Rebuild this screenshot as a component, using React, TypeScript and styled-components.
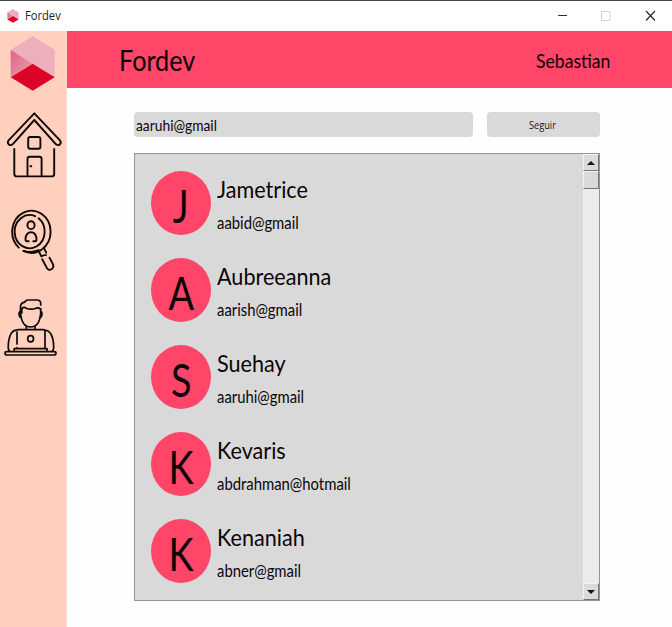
import React from "react";
import styled, { createGlobalStyle } from "styled-components";

const Global = createGlobalStyle`
  * { box-sizing: border-box; }
  body { margin: 0; background: #fff; overflow: hidden; font-family: Lato, "Open Sans", sans-serif; color: #0c0508; }
`;

const Window = styled.div`
  width: 672px;
  height: 627px;
  display: flex;
  flex-direction: column;
  background: #fefefe;
`;

const TitleBar = styled.header`
  height: 31px;
  flex: none;
  display: flex;
  align-items: center;
  border-top: 1px solid #454345;
  padding-left: 6px;
  background: #fff;
`;

const Label = styled.span<{ $size: number; $scale: number; $line: number }>`
  display: block;
  white-space: nowrap;
  font-size: ${(p) => p.$size}px;
  line-height: ${(p) => p.$line}px;
  transform: scaleX(${(p) => p.$scale});
  transform-origin: left center;
`;

const WindowName = styled.div`
  flex: 1;
  margin-left: 5px;
  color: #222;
  font-family: "Open Sans", sans-serif;
`;

const WindowControls = styled.div`
  display: flex;
  width: 132px;
  & > svg { width: 44px; height: 30px; }
`;

const Body = styled.div`
  flex: 1;
  display: flex;
  min-height: 0;
`;

const Sidebar = styled.nav`
  width: 67px;
  display: flex;
  flex-direction: column;
  background: #fed0bd;
  border-right: 1px solid #fbdcd2;
  & > svg { display: block; flex: none; width: 66px; }
`;

const Main = styled.main`
  flex: 1;
  display: flex;
  flex-direction: column;
`;

const Banner = styled.div`
  height: 57px;
  display: flex;
  justify-content: space-between;
  background: #ff4568;
  padding: 0 57px 0 52px;
`;

const BannerUser = styled.div`
  width: 79px;
`;

const Content = styled.section`
  width: 466px;
  margin: 24px 0 0 67px;
`;

const SearchRow = styled.div`
  display: flex;
  gap: 14px;
  height: 25px;
`;

const SearchField = styled.div`
  flex: 1;
  padding-left: 2px;
  background: #d9d9d9;
  border-radius: 4px;
`;

const FollowButton = styled.button`
  width: 113px;
  padding: 0 0 0 42px;
  border: 0;
  border-radius: 4px;
  background: #d9d9d9;
  color: #19151c;
  text-align: left;
  font-family: "Open Sans", sans-serif;
`;

const ListBox = styled.div`
  display: flex;
  height: 448px;
  margin-top: 16px;
  border: 1px solid #949494;
  background: #d9d9d9;
`;

const People = styled.ul`
  flex: 1;
  margin: 0;
  padding: 17px 0 0 16px;
  list-style: none;
`;

const Person = styled.li`
  display: flex;
  gap: 6px;
  height: 87px;
`;

const Avatar = styled.div`
  display: flex;
  justify-content: center;
  width: 60px;
  height: 64px;
  border-radius: 50%;
  background: #ff4568;
`;

const Initial = styled.span`
  font-size: 45.5px;
  line-height: 69px;
  transform: scaleX(0.83);
`;

const Scrollbar = styled.div`
  width: 16px;
  display: flex;
  flex-direction: column;
  background: #ececec;
`;

const ScrollPart = styled.div<{ $height: number }>`
  height: ${(p) => p.$height}px;
  flex: none;
  display: flex;
  align-items: center;
  justify-content: center;
  background: #dadada;
  border: 1px solid;
  border-color: #f4f4f4 #777 #777 #f4f4f4;
`;

const Track = styled.div`
  flex: 1;
`;

const Arrow = styled.i<{ $down?: boolean }>`
  border: 4px solid transparent;
  border-top: ${(p) => (p.$down ? "4px solid #111" : "0")};
  border-bottom: ${(p) => (p.$down ? "0" : "4px solid #111")};
`;

const Cube = () => (
  <>
    <path d="M22 0L44 13.5V41L22 27.5L0 13.5Z" fill="#edafb9" />
    <path d="M0 13.5L22 27.5L0 41Z" fill="url(#side)" />
    <path d="M22 27.5L44 41L22 54.5L0 41Z" fill="#dc0327" />
    <defs>
      <linearGradient id="side" x1="0" y1="0" x2="1" y2="1">
        <stop offset="0" stopColor="#e06287" />
        <stop offset="1" stopColor="#eaa2af" />
      </linearGradient>
    </defs>
  </>
);

const stroke = {
  fill: "none",
  stroke: "#100807",
  strokeWidth: 1.9,
  strokeLinecap: "round" as const,
  strokeLinejoin: "round" as const,
};

const HouseIcon = () => (
  <svg height="90" viewBox="0 100 66 90" {...stroke}>
    <path d="M34.3 113.3L60 140.3Q61.5 142.5 60 144.2Q58 146 56 144.3L34.3 120L12.6 144.3Q10.5 146 8.6 144.2Q7 142.5 8.6 140.3Z" />
    <path d="M14.3 149V174Q14.3 176.4 16.7 176.4H51.8Q54.2 176.4 54.2 174V149" />
    <rect x="28.2" y="137" width="12.2" height="11.8" rx="2" />
    <path d="M27.5 176V159Q27.5 156.7 29.8 156.7H39.3Q41.6 156.7 41.6 159V176M30.4 166.3H31.3" />
  </svg>
);

const SearchPersonIcon = () => (
  <svg height="90" viewBox="0 190 66 90" {...stroke}>
    <path d="M18.8 247.6A19.2 21 0 1 1 23.5 250.9" />
    <path d="M23.5 250.9Q30.5 253.5 38.6 250.2" />
    <path d="M35.2 216.2A15 16.6 0 1 0 38.6 218.3" />
    <ellipse cx="31" cy="225.2" rx="3.6" ry="3.9" />
    <path d="M28.7 241.3H27Q25.3 241.3 25.5 239Q26 232.2 31 232.2Q36 232.2 36.5 239Q36.7 241.3 35 241.3H33.3" />
    <path d="M38.8 251.4L41.3 256.3Q44.5 254.7 45.9 255.2M44 248.2L46.2 252.7" />
    <path d="M42.2 259.2L46.4 267.1Q48.4 271.2 51.5 269.3Q54.6 267.1 52.6 263.5L49.5 257.7" />
  </svg>
);

const DeveloperIcon = () => (
  <svg height="90" viewBox="0 280 66 90" {...stroke} strokeWidth={1.7}>
    <path d="M40.7 305V303.5Q40.7 300 37 300H28.2Q25.5 300 24.8 302.2Q20.5 302.7 20.5 307V313Q21.8 327 30.5 327Q39.7 327 40.7 313V308.8" />
    <path d="M21.8 313V308.5Q25 306.3 26 308.3Q31 310 35.3 308.5Q38 306.8 40.5 309" />
    <path d="M20.5 311.5Q18.5 312 19.2 315.5Q19.7 317.4 21 317.4M40.7 311.5Q42.5 312 41.8 315.5Q41.3 317.4 40 317.4" />
    <path d="M26.3 326V329.5M35 326V329.5M18 329.7H43.2Q45 329.7 45 332V348.3M17 332V344M17 347.7V348.3M17 330.2Q13.5 330 11.2 333.3Q8.2 338.5 8.2 347.5Q8.2 349.5 9.5 351M45 330.2Q48.4 330.5 50.5 333.3Q53.7 338.5 53.7 347.5Q53.7 349.5 52.5 351" />
    <ellipse cx="30.6" cy="338.8" rx="2.9" ry="3.1" />
    <path d="M14.2 351V348.7H47V351M6.5 351.6H54Q56 351.6 56 353Q56 355 54 355H7Q5 355 5 353Q5 351.6 6.5 351.6Z" />
  </svg>
);

const people = [
  { name: "Jametrice", email: "aabid@gmail", nameScale: 0.9, emailScale: 0.9 },
  { name: "Aubreeanna", email: "aarish@gmail", nameScale: 0.9, emailScale: 0.9 },
  { name: "Suehay", email: "aaruhi@gmail", nameScale: 0.9, emailScale: 0.9 },
  { name: "Kevaris", email: "abdrahman@hotmail", nameScale: 0.9, emailScale: 0.9 },
  { name: "Kenaniah", email: "abner@gmail", nameScale: 0.9, emailScale: 0.9 },
];

export default function App() {
  return (
    <Window>
      <Global />
      <TitleBar>
        <svg width="14" height="14" viewBox="0 0 44 55"><Cube /></svg>
        <WindowName><Label $size={12} $scale={0.93} $line={30}>Fordev</Label></WindowName>
        <WindowControls>
          <svg viewBox="0 0 44 30" fill="none" stroke="#333"><path d="M18 14.5h9" /></svg>
          <svg viewBox="0 0 44 30" fill="none" stroke="#d4d4d4"><rect x="17.5" y="10.5" width="8.5" height="9" /></svg>
          <svg viewBox="0 0 44 30" fill="none" stroke="#222" strokeWidth="1.1"><path d="M18 10l9 9.5M27 10l-9 9.5" /></svg>
        </WindowControls>
      </TitleBar>
      <Body>
        <Sidebar>
          <svg height="69" viewBox="0 31 66 69"><g transform="translate(10.7 36.3)"><Cube /></g></svg>
          <HouseIcon />
          <SearchPersonIcon />
          <DeveloperIcon />
        </Sidebar>
        <Main>
          <Banner>
            <Label $size={28} $scale={0.9} $line={58}>Fordev</Label>
            <BannerUser><Label $size={20} $scale={0.88} $line={59}>Sebastian</Label></BannerUser>
          </Banner>
          <Content>
            <SearchRow>
              <SearchField><Label $size={15} $scale={0.92} $line={27}>aaruhi@gmail</Label></SearchField>
              <FollowButton><Label $size={10} $scale={0.92} $line={26}>Seguir</Label></FollowButton>
            </SearchRow>
            <ListBox>
              <People>
                {people.map((p) => (
                  <Person key={p.name}>
                    <Avatar><Initial>{p.name[0]}</Initial></Avatar>
                    <div>
                      <Label $size={24} $scale={p.nameScale} $line={35}>{p.name}</Label>
                      <Label $size={16.5} $scale={p.emailScale} $line={34}>{p.email}</Label>
                    </div>
                  </Person>
                ))}
              </People>
              <Scrollbar>
                <ScrollPart $height={17}><Arrow /></ScrollPart>
                <ScrollPart $height={18} />
                <Track />
                <ScrollPart $height={17}><Arrow $down /></ScrollPart>
              </Scrollbar>
            </ListBox>
          </Content>
        </Main>
      </Body>
    </Window>
  );
}
